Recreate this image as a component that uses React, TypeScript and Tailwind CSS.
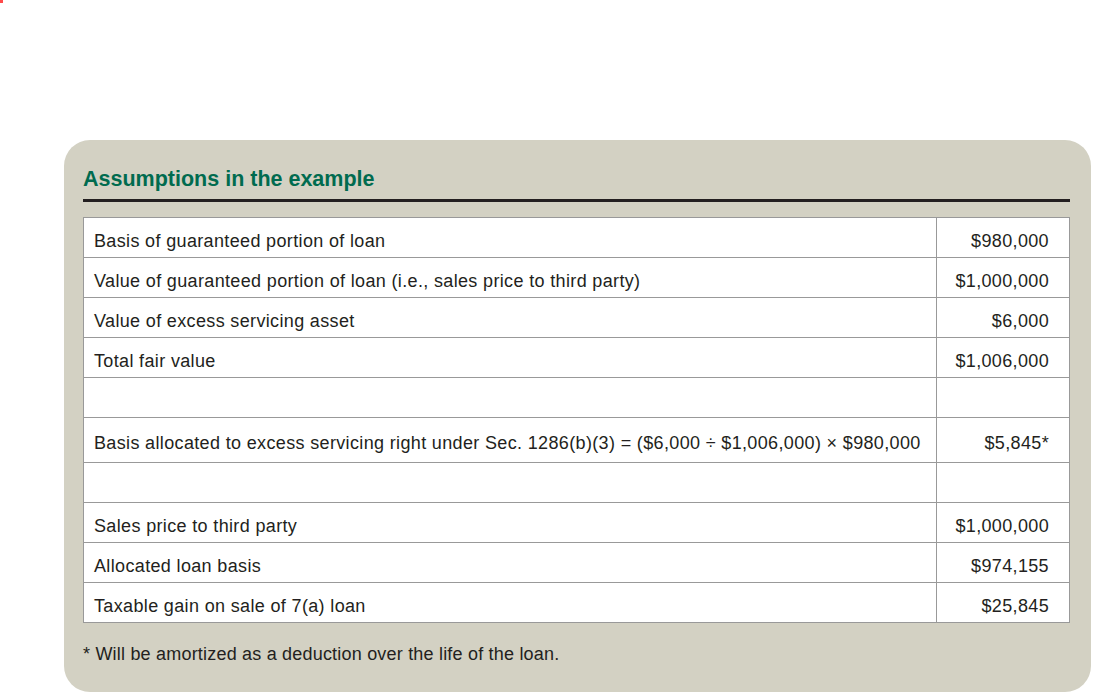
const ROWS: { label: string; value: string; h?: 'tall' }[] = [
  { label: 'Basis of guaranteed portion of loan', value: '$980,000' },
  { label: 'Value of guaranteed portion of loan (i.e., sales price to third party)', value: '$1,000,000' },
  { label: 'Value of excess servicing asset', value: '$6,000' },
  { label: 'Total fair value', value: '$1,006,000' },
  { label: '', value: '' },
  {
    label: 'Basis allocated to excess servicing right under Sec. 1286(b)(3) = ($6,000 ÷ $1,006,000) × $980,000',
    value: '$5,845*',
    h: 'tall',
  },
  { label: '', value: '' },
  { label: 'Sales price to third party', value: '$1,000,000' },
  { label: 'Allocated loan basis', value: '$974,155' },
  { label: 'Taxable gain on sale of 7(a) loan', value: '$25,845' },
]

export default function App() {
  return (
    <div
      className="relative min-h-[697px] w-[1095px] bg-white text-[#231f20]"
      style={{ fontFamily: '"Liberation Sans", Arial, sans-serif' }}
    >
      {/* marca roja diminuta de la esquina */}
      <div className="absolute left-0 top-0 h-[3px] w-[3px] bg-[#ff4a4a]" />

      <div className="h-[140px]" />
      <section className="ml-[64px] flex h-[552px] w-[1027px] flex-col rounded-[26px] bg-[#d3d1c3] pl-[19px] pr-[21px] pt-[27px]">
        <h2 className="text-[21.5px] font-bold leading-[25px] text-[#006b4f]">Assumptions in the example</h2>
        <div className="mt-[7px] h-[3px] bg-[#231f20]" />

        <div className="mt-[15px] border border-[#999999] bg-white">
          {ROWS.map((r, i) => (
            <div
              key={i}
              className={`flex ${i === ROWS.length - 1 ? '' : 'border-b border-[#999999]'} ${
                r.h === 'tall' ? 'h-[45px]' : i === ROWS.length - 1 ? 'h-[39px]' : 'h-[40px]'
              }`}
            >
              <div className="flex w-[853px] items-center border-r border-[#999999] pl-[10px] pt-[7px] text-[18px] tracking-[0.35px]">
                {r.label}
              </div>
              <div className="flex flex-1 items-center justify-end pr-[20px] pt-[7px] text-[18px] tracking-[0.35px]">
                {r.value}
              </div>
            </div>
          ))}
        </div>

        <p className="mt-[21px] text-[18px] leading-[21px] tracking-[0.2px]">
          * Will be amortized as a deduction over the life of the loan.
        </p>
      </section>
    </div>
  )
}
